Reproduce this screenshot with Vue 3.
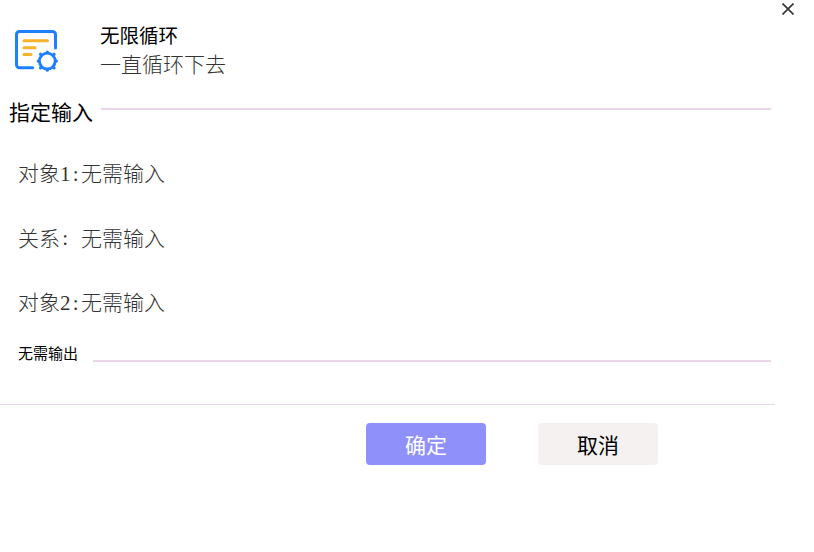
<script setup>
import { ref } from 'vue'

const visible = ref(true)

const node = {
	title: "无限循环",
	desc: "一直循环下去"
}

const inputs = ref([
	{ label: "对象", mark: "1:", value: "无需输入" },
	{ label: "关系", mark: ":", value: "无需输入" },
	{ label: "对象", mark: "2:", value: "无需输入" }
])

const close = () => {
	visible.value = false
}
</script>

<template>
	<div v-if="visible" class="dialog">
		<header>
			<svg class="node-icon" viewBox="0 0 46 44" fill="none" stroke-linecap="round">
				<path d="M18.6 39.8H5.5A3 3 0 0 1 2.5 36.8V6.5A3 3 0 0 1 5.5 3.5H38.5A3 3 0 0 1 41.5 6.5V20"
					stroke="#1e80ff" stroke-width="3" />
				<path d="M10 12.8h23.5M10 19.7h11M10 26.4h7" stroke="#f5b32a" stroke-width="3" />
				<g stroke="#1e80ff">
					<circle cx="33.3" cy="33.1" r="7.9" stroke-width="2.8" />
					<path
						d="M33.3 24.2v-.2M33.3 42v.2M24.4 33.1h-.2M42.2 33.1h.2M26.9 26.7l-.4-.4M39.7 26.7l.4-.4M26.9 39.5l-.4.4M39.7 39.5l.4.4"
						stroke-width="3.2" />
				</g>
			</svg>
			<div class="heading">
				<div class="title">{{ node.title }}</div>
				<div class="desc">{{ node.desc }}</div>
			</div>
			<a href="#" class="close" @click.prevent="close">
				<svg viewBox="0 0 12 12">
					<path d="M.5.5l11 11M11.5.5l-11 11" stroke="#37373c" stroke-width="1.7" />
				</svg>
			</a>
		</header>

		<div class="section">
			<span>指定输入</span>
			<div class="line"></div>
		</div>

		<div class="inputs">
			<div v-for="item in inputs" class="input-row">
				<span>{{ item.label }}</span>
				<span class="mark"><i v-for="c in item.mark">{{ c }}</i></span>
				<span>{{ item.value }}</span>
			</div>
		</div>

		<div class="section output">
			<span>无需输出</span>
			<div class="line"></div>
		</div>

		<footer>
			<button class="btn primary" @click="close">确定</button>
			<button class="btn" @click="close">取消</button>
		</footer>
	</div>
</template>

<style>
body {
	background: #fff;
}
</style>

<style scoped>
.dialog {
	width: 814px;
	height: 552px;
	overflow: hidden;
	color: #000;
	font-family: "Noto Sans CJK SC", sans-serif;
}

header {
	display: flex;
	height: 90px;
}

.node-icon {
	flex: none;
	width: 46px;
	height: 44px;
	margin: 28px 0 0 14px;
}

.heading {
	flex: 1;
	padding: 20px 0 0 40px;
}

.title {
	font-size: 19.5px;
	line-height: 30px;
}

.desc {
	font-size: 21px;
	line-height: 27px;
	font-weight: 300;
	color: #333;
}

.close {
	width: 12px;
	height: 12px;
	margin: 3px 20px 0 0;
}

.close svg {
	display: block;
}

.section {
	display: flex;
	align-items: flex-start;
	height: 45px;
	padding-left: 9px;
	margin-right: 43px;
	font-size: 21px;
	line-height: 43px;
}

.section span {
	width: 92px;
	flex: none;
}

.line {
	flex: 1;
	height: 2px;
	margin-top: 18px;
	background: #e8d5e8;
}

.inputs {
	padding: 5px 0 1px 18px;
}

.input-row {
	display: flex;
	height: 64.5px;
	align-items: center;
	font-size: 21px;
	font-weight: 300;
	color: #333;
}

.mark {
	display: flex;
	width: 21px;
	padding-top: 4px;
	font-family: "Liberation Serif", serif;
}

.mark i {
	width: 10.5px;
	font-style: normal;
	text-align: center;
}

.section.output {
	height: 69.5px;
	padding-left: 18px;
	font-size: 15px;
	line-height: 36px;
}

.output span {
	width: 75px;
}

.output .line {
	margin-top: 25.5px;
}

footer {
	display: flex;
	gap: 52px;
	width: 409px;
	padding: 18px 0 0 366px;
	border-top: 1px solid #e8d5e8;
}

.btn {
	width: 120px;
	height: 42px;
	padding: 0;
	border: none;
	border-radius: 4px;
	background: #f5f1f1;
	color: #000;
	font: 21px "Noto Sans CJK SC", sans-serif;
	cursor: pointer;
}

.btn.primary {
	background: #9090fa;
	color: #fff;
}
</style>
